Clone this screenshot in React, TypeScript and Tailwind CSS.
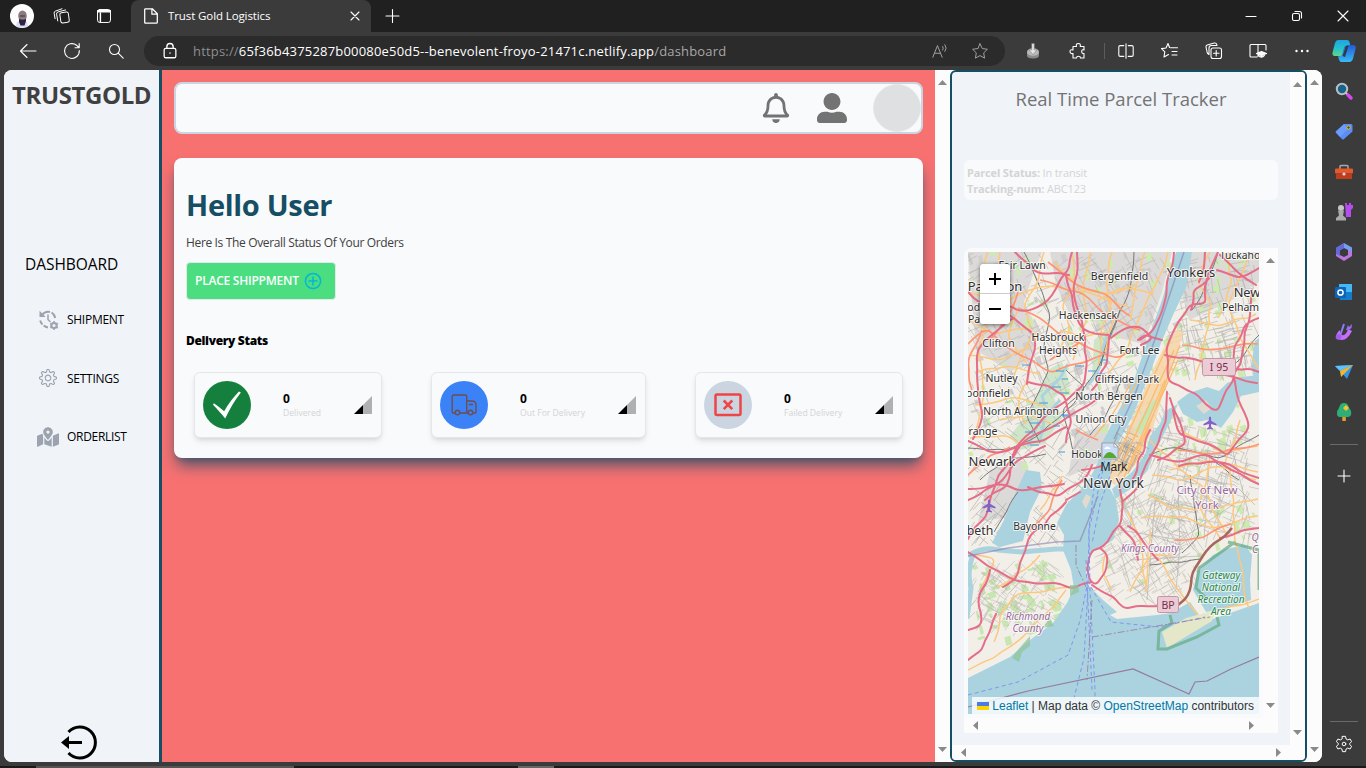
import React from 'react';
import { FaRegBell, FaUserAlt, FaMapMarkedAlt } from 'react-icons/fa';
import { SlSettings } from 'react-icons/sl';
import { GiCheckMark } from 'react-icons/gi';

type IconProps = { children: React.ReactNode; size?: number; box?: number; className?: string; color?: string; sw?: number };

function Icon({ children, size = 20, box = 20, className = '', color = 'text-white', sw = 1.1 }: IconProps) {
  return (
    <svg
      width={size}
      height={size}
      viewBox={`0 0 ${box} ${box}`}
      fill="none"
      stroke="currentColor"
      strokeWidth={sw}
      strokeLinecap="round"
      strokeLinejoin="round"
      className={`shrink-0 ${color} ${className}`}
    >
      {children}
    </svg>
  );
}

function TitleBar() {
  return (
    <div className="flex h-8 shrink-0 bg-[#202020]">
      <div className="flex w-[131px] items-center pl-[10px]">
        <svg width="24" height="24" viewBox="0 0 24 24" className="shrink-0">
          <circle cx="12" cy="12" r="12" fill="#fdfdfe" />
          <path d="M7 18q5-3 10 0l1 4q-6 3-12 0z" fill="#dcdcf2" />
          <ellipse cx="12.500" cy="12" rx="4.300" ry="5.500" fill="#8a7b80" />
          <path d="M9 15q3.500 1.500 7 0v2l-1.500 4.500h-4L9 18z" fill="#2c2540" />
          <path d="M10 12h5" stroke="#3b3142" strokeWidth="1" />
        </svg>
        <Icon size={18} className="ml-[19px]">
          <rect x="8" y="6" width="9.500" height="11.500" rx="2" transform="rotate(-8 12 11)" />
          <path d="M5.300 15.500 4 8q-.3-2 1.600-2.500L14 3.300M2.300 13 1.300 7q-.3-2 1.600-2.500L10 2" />
        </Icon>
        <Icon size={18} className="ml-[24px]">
          <rect x="2.800" y="2.800" width="14.400" height="14.400" rx="2.500" />
          <path d="M3 5.200h14M3 4h14M6 7v10" strokeWidth="1.600" />
        </Icon>
      </div>
      <div className="flex w-[240px] items-center rounded-t-lg bg-[#3b3b3b] pl-[11px] pr-[9px]">
        <Icon size={18}>
          <path d="M4 2h7.500L17 7.500V17q0 1-1 1H4q-1 0-1-1V3q0-1 1-1zM11 2.500V8h5.500" strokeWidth="1.400" />
        </Icon>
        <span className="ml-[8px] flex-1 whitespace-nowrap text-[11.500px] tracking-[-0.100px] text-white">Trust Gold Logistics</span>
        <Icon size={14} box={14}><path d="m3 3 8 8M11 3l-8 8" /></Icon>
      </div>
      <div className="flex flex-1 items-center pl-[13px]">
        <Icon size={18} box={18}><path d="M8.500 2.500v13M2 9h13" /></Icon>
      </div>
      <div className="flex w-[140px] items-center justify-between pl-[18px] pr-[16px]">
        <Icon size={14} box={14}><path d="M2 7.500h10" /></Icon>
        <Icon size={14} box={14}><rect x="2.500" y="4.500" width="7" height="7" rx="1.500" /><path d="M5 2.500h4.500q2 0 2 2V9" /></Icon>
        <Icon size={14} box={14}><path d="m2 2 10 10M12 2 2 12" /></Icon>
      </div>
    </div>
  );
}

function Toolbar() {
  return (
    <div className="flex h-[38px] shrink-0 items-center">
      <div className="flex w-[144px] items-center gap-[24px] pl-[18px]">
        <Icon><path d="M18 10H2.500M9 3.500 2.500 10 9 16.500" /></Icon>
        <Icon><path d="M17.300 9.500a7.400 7.400 0 1 1-2.800-5.300L17 6.500M17.200 2.500v4.200H13" /></Icon>
        <Icon><circle cx="8.500" cy="8.500" r="5" /><path d="m12.200 12.200 5 5" /></Icon>
      </div>
      <div className="flex h-[30px] w-[861px] items-center rounded-full bg-[#2b2b2b] pl-[17px] pr-[16px]">
        <Icon size={18}><rect x="3.500" y="7" width="13" height="10.500" rx="1.800" strokeWidth="1.400" /><path d="M6.500 7V5.200a3.500 3.500 0 0 1 7 0V7M10 12v.4" strokeWidth="1.500" /></Icon>
        <span className="ml-[14px] mt-px flex-1 whitespace-nowrap text-[13px] tracking-[0.185px] text-[#8e8e8e]">
          https://<span className="text-white">65f36b4375287b00080e50d5--benevolent-froyo-21471c.netlify.app</span><span className="text-[#a8a8a8]">/dashboard</span>
        </span>
        <Icon size={18} color="text-[#a0a0a0]"><path d="m2 17 5.200-13 5.200 13M4 12.500h6.500M13 5q1.500 2 0 4M15.500 3q2.800 4 0 7.500" /></Icon>
        <Icon size={18} className="ml-[22px]" color="text-[#a0a0a0]"><path d="m10 2 2.500 5.300 5.700.8-4.100 4 1 5.800-5.100-2.800-5.100 2.800 1-5.800-4.100-4 5.700-.8z" /></Icon>
      </div>
      <div className="flex flex-1 items-center pl-[19px]">
        <svg width="18" height="20" viewBox="0 0 18 20" className="shrink-0"><path d="M3 11v3.500q0 3 6 3t6-3V11z" fill="#8b8b8b" /><ellipse cx="9" cy="11" rx="6" ry="3.800" fill="#b9b9b9" /><path d="M7.700 2.500h2.600V9H13l-4 4.500L5 9h2.700z" fill="#e4e4e4" stroke="#777" strokeWidth=".5" /></svg>
        <Icon className="ml-[26px]"><path d="M4 5h3.500q-1-3 1.800-3t1.900 3H15v3.500q-2.300-.8-2.300 1.500T15 12v4.500h-3.500q0-1.800-2-1.800t-2 1.800H4V12Q1 12.500 1 10t3-1.500z" transform="translate(1 .5)" /></Icon>
        <div className="ml-[16px] h-4 w-px bg-[#5c5c5c]" />
        <Icon size={18} className="ml-[12px]"><path d="M7.500 4h-4q-1.500 0-1.500 1.500v9Q2 16 3.500 16h4M12.500 4h4q1.500 0 1.500 1.500v9q0 1.500-1.500 1.500h-4M10 2v16" strokeWidth="1.200" /></Icon>
        <Icon className="ml-[25px]"><path d="M10.500 6.800h7M12 10.500h5M12 14h5M9.500 6.500 8 2.500 6 7l-4.500.6 3.300 3.200L4 16l4.500-2.500" /></Icon>
        <Icon className="ml-[24px]"><rect x="7" y="7" width="10.500" height="10.500" rx="2" /><path d="M12.200 9.500v5.500M9.500 12.200H15M5 13.500 3.300 12 2 6q-.2-1.500 1.200-2l7-2q2-.3 2.500 1.300l.3 1.200H7.500Q5 4.500 5 7z" /></Icon>
        <Icon className="ml-[24px]"><path d="M10 3.500v12M9 16H3q-1 0-1-1V4.500q0-1 1-1h14q1 0 1 1V9" /><path d="m8.500 12.500 5-2 5 2-5 2zM10.500 14.500q3 3.500 6 0" fill="currentColor" /></Icon>
        <Icon className="ml-[24px]"><g fill="currentColor" stroke="none"><circle cx="4.500" cy="10" r="1.200" /><circle cx="10" cy="10" r="1.200" /><circle cx="15.500" cy="10" r="1.200" /></g></Icon>
        <svg width="24" height="24" viewBox="0 0 24 24" className="ml-[20px] shrink-0">
          <defs>
            <linearGradient id="cpa" x1="0" y1="0" x2="0" y2="1"><stop stopColor="#1fa4df" /><stop offset=".5" stopColor="#22c1cf" /><stop offset="1" stopColor="#64d982" /></linearGradient>
            <linearGradient id="cpb" x1="0" y1="0" x2="0" y2="1"><stop stopColor="#235bd8" /><stop offset="1" stopColor="#38bcf5" /></linearGradient>
          </defs>
          <path d="M6 1h9q2 0 2.500 2l.7 3-5 1-3 9Q9.500 18 7 17H3q-3 0-2.500-3.500L3 4q1-3 3-3z" fill="url(#cpa)" />
          <path d="M18 6h3q3.500 0 2.500 4l-2.300 9q-1 4-4 4H9q-2-.5-3-6 3 1 4-2l2-6q1-3 6-3z" fill="url(#cpb)" />
          <path d="m10.500 17 3.500-10h2.500L13 18z" fill="#31394b" />
        </svg>
      </div>
    </div>
  );
}

function Arrow({ dir }: { dir: 'up' | 'down' | 'left' | 'right' }) {
  const d = { up: 'M0 7 4.500 2 9 7z', down: 'M0 2h9L4.500 7z', left: 'M7 0v9L2 4.500z', right: 'M2 0v9l5-4.500z' }[dir];
  return <svg width="9" height="9" viewBox="0 0 9 9" className="shrink-0"><path d={d} fill="#8a8a8a" /></svg>;
}

function VBar() {
  return (
    <div className="flex w-[15px] shrink-0 flex-col items-center justify-between bg-[#fcfcfc] py-2">
      <Arrow dir="up" /><Arrow dir="down" />
    </div>
  );
}

function Sidebar() {
  return (
    <nav className="flex w-[158px] shrink-0 flex-col border-r-[3px] border-[#164e63] bg-[#f0f4f9]">
      <div className="mt-[9px] h-8 whitespace-nowrap pl-[8px] text-[24px] font-bold leading-8 tracking-[-0.400px] text-[#404040]">TRUSTGOLD</div>
      <div className="mt-[141px] h-6 pl-[21px] text-[15.500px] leading-6 tracking-[-0.050px] text-black">DASHBOARD</div>
      <div className="mt-[34px] flex h-5 items-center pl-[35px] text-xs tracking-[-0.280px] text-black">
        <Icon color="text-[#9ca3af]" sw={2}>
          <path d="M3 5A8 8 0 0 1 11 2M12.500 2.500A8 8 0 0 1 16.200 8M1.200 10.500A8 8 0 0 0 3.500 14.500M4.700 15.600A8 8 0 0 0 9 17.500" strokeLinecap="butt" />
          <path d="M.5.800v6.200h6.200z" fill="currentColor" stroke="none" />
          <path d="M9 5v4.500l2 2" strokeWidth="1.500" />
          <circle cx="15" cy="15.500" r="2.600" />
          <path d="M15 11.200v1.500M15 18.300v1.500M11.300 13.400l1.200.7M17.500 17l1.300.8M11.300 17.700l1.200-.8M17.500 14l1.300-.7" strokeLinecap="butt" />
        </Icon>
        <span className="ml-[8px]">SHIPMENT</span>
      </div>
      <div className="mt-[39px] flex h-5 items-center pl-[35px] text-xs tracking-[-0.250px] text-black">
        <SlSettings size={18} color="#9ca3af" className="-mt-0.5" />
        <span className="ml-[10px]">SETTINGS</span>
      </div>
      <div className="mt-[38px] flex h-5 items-center pl-[33px] text-xs tracking-[-0.300px] text-black">
        <FaMapMarkedAlt size={22} color="#9ca3af" />
        <span className="ml-[8px]">ORDERLIST</span>
      </div>
      <div className="mt-auto flex h-[37px] pl-[57px]">
        <svg width="38" height="36" viewBox="0 0 38 36" fill="none">
          <path d="M7.500 7A15.500 15.500 0 1 1 7.500 28" stroke="#000" strokeWidth="3" />
          <path d="M7 17.500h14" stroke="#000" strokeWidth="3" />
          <path d="M0 17.500 8 11v13z" fill="#000" />
        </svg>
      </div>
    </nav>
  );
}

function Signal() {
  return <svg width="18" height="18" viewBox="0 0 18 18" className="shrink-0"><path d="M0 18 9 9v9z" fill="#000" /><path d="M9 9l9-9v18H9z" fill="#afb0b2" /></svg>;
}

function Stat({ className, disc, icon, label }: { className: string; disc: string; icon: React.ReactNode; label: string }) {
  return (
    <div className={`flex h-[66px] items-center rounded-md border border-[#e5e7eb] bg-[#f8fafc] pl-2 pr-[9px] shadow-md ${className}`}>
      <div className={`flex h-12 w-12 shrink-0 items-center justify-center rounded-full ${disc}`}>{icon}</div>
      <div className="ml-8 flex-1 whitespace-nowrap">
        <div className="text-xs font-bold leading-[15px] text-black">0</div>
        <div className="mt-px text-[8.600px] leading-[12px] text-[#d4d4d4]">{label}</div>
      </div>
      <Signal />
    </div>
  );
}

function Main() {
  return (
    <main className="flex min-w-0 flex-1 flex-col overflow-hidden bg-[#f87171] px-3 pt-3">
      <header className="flex h-[52px] shrink-0 items-center justify-end rounded-lg border-2 border-[#cbd5e1] bg-[#f8fafc] text-[#737373]">
        <FaRegBell size={30} />
        <FaUserAlt size={30} className="ml-[26px]" />
        <div className="ml-[26px] h-12 w-12 rounded-full border border-[#e5e7eb] bg-[#dfe0e2]" />
      </header>
      <section className="mt-6 h-[300px] shrink-0 rounded-lg bg-[#f8fafc] px-3 shadow-[0_10px_15px_-3px_#475569,0_4px_6px_-4px_#475569]">
        <h1 className="mt-[26px] text-[29px] font-bold leading-[42px] tracking-[-0.300px] text-[#164e63]">Hello User</h1>
        <p className="mt-[9px] text-xs leading-4 tracking-[-0.350px] text-[#404040]">Here Is The Overall Status Of Your Orders</p>
        <button className="mt-[11px] flex h-[38px] w-[150px] items-center rounded border border-[#e5e7eb] bg-[#4ade80] pl-2 text-left text-xs font-semibold tracking-[-0.230px] text-white">
          <span className="w-[106px] whitespace-nowrap">PLACE SHIPPMENT</span>
          <Icon size={18} box={18} className="ml-[3px]" color="text-[#06b6d4]" sw={1.500}><circle cx="9" cy="9" r="7.600" /><path d="M9 5v8M5 9h8" /></Icon>
        </button>
        <h2 className="mt-[33px] text-xs font-extrabold leading-4 tracking-[-0.330px] text-black">Delivery Stats</h2>
        <div className="mt-[23px] flex gap-[49px] pl-2">
          <Stat className="w-[188px]" disc="bg-[#15803d]" label="Delivered" icon={<GiCheckMark size={30} color="#fff" />} />
          <Stat className="w-[215px]" disc="bg-[#3b82f6]" label="Out For Delivery" icon={
            <Icon size={26} box={26} color="text-[#6b4f52]" sw={1.400}>
              <path d="M4 21H2.500q-1.300 0-1.300-1.300V4.500Q1.200 3 2.700 3h11.500q1.500 0 1.500 1.500V21H9M15.700 9h5q4.300 0 4.300 4v7q0 1-1 1h-2M18.500 12.500h3M15.700 21h1.500" />
              <circle cx="6.500" cy="20.500" r="2.200" /><circle cx="19.500" cy="20.500" r="2.200" />
            </Icon>} />
          <Stat className="w-[208px]" disc="bg-[#cbd5e1]" label="Failed Delivery" icon={
            <Icon size={28} box={28} color="text-[#ef4444]" sw={2.500}><rect x="1.500" y="3.500" width="25" height="20.500" rx="1.500" /><path d="m9.700 9.500 8.600 8.600M18.300 9.500l-8.600 8.600" strokeLinecap="butt" /></Icon>} />
        </div>
      </section>
    </main>
  );
}

function makeRandom(seed: number) {
  let s = seed;
  return () => { s = (s * 16807) % 2147483647; return s / 2147483647; };
}

/** Turns "M x y l dx dy dx dy ..." polylines into gently winding curves. */
function wind(path: string, wobble = 2.4) {
  const r = makeRandom(path.length * 97 + 5);
  let out = '';
  for (const part of path.split('M').slice(1)) {
    const n = (part.match(/-?\d+(\.\d+)?/g) || []).map(Number);
    const pts: [number, number][] = [[n[0], n[1]]];
    for (let i = 2; i + 1 < n.length; i += 2) {
      const [px, py] = pts[pts.length - 1];
      const dx = n[i];
      const dy = n[i + 1];
      const len = Math.hypot(dx, dy);
      const steps = Math.max(1, Math.round(len / 11));
      for (let k = 1; k <= steps; k++) {
        const j = k < steps ? (r() - 0.5) * wobble * 2 : 0;
        pts.push([px + (dx * k) / steps - (dy / len) * j, py + (dy * k) / steps + (dx / len) * j]);
      }
    }
    out += `M${pts[0][0]} ${pts[0][1]}`;
    for (let i = 1; i < pts.length - 1; i++) {
      const mx = (pts[i][0] + pts[i + 1][0]) / 2;
      const my = (pts[i][1] + pts[i + 1][1]) / 2;
      out += `Q${pts[i][0].toFixed(1)} ${pts[i][1].toFixed(1)} ${mx.toFixed(1)} ${my.toFixed(1)}`;
    }
    const last = pts[pts.length - 1];
    out += `L${last[0]} ${last[1]}`;
  }
  return out;
}

function streets(seed: number, count: number, x0: number, y0: number, x1: number, y1: number, base: number) {
  const r = makeRandom(seed);
  let d = '';
  for (let i = 0; i < count; i++) {
    const x = x0 + r() * (x1 - x0);
    const y = y0 + r() * (y1 - y0);
    const a = ((base + (r() > 0.5 ? 90 : 0) + (r() - 0.5) * 20) * Math.PI) / 180;
    const l = 5 + r() * 17;
    d += `M${x.toFixed(1)} ${y.toFixed(1)}l${(Math.cos(a) * l).toFixed(1)} ${(Math.sin(a) * l).toFixed(1)}`;
  }
  return d;
}

function patches(seed: number, count: number, x0: number, y0: number, x1: number, y1: number) {
  const r = makeRandom(seed);
  let d = '';
  for (let i = 0; i < count; i++) {
    const x = x0 + r() * (x1 - x0);
    const y = y0 + r() * (y1 - y0);
    const w = 2 + r() * 6;
    const h = 2 + r() * 7;
    d += `M${x.toFixed(1)} ${y.toFixed(1)}l${w.toFixed(1)} ${(-w / 3).toFixed(1)}l2 ${h.toFixed(1)}l${(-w).toFixed(1)} 2z`;
  }
  return d;
}

const railways = 'M1024 252l16 35 10 26-6 40 5 18-23 44 14 28M1134 252l-3 32-20 48-10 34M1066 370l20 18-24 22 8 26 4 18M968 448l40 2 32-16 34-30 26-40 20-54M1090 435l14-15 20-44M1192 310l12-20 14-38M1150 455l24-8 45 12 40-24M1215 462l24 18M980 480l24-20 42-6M1150 565l52-6M1190 475l10 60-18 18M1018 492l-24 40M1259 335l-22 28-24 8';
const secondary = 'M988 252l-8 28 10 38-12 30 6 46-10 42M1000 252l-4 26 22 34-10 26 22 32-12 32 8 22M1044 252l-6 30-14 24 8 30-18 40M1072 252l2 30-12 26 8 24-15 26M1090 252l-7 34 4 34-14 40M1112 252l-6 30 8 40-9 30M1145 252l-10 38-4 30M1168 252l-14 36-20 42-6 20-20 24M1210 252l-12 30 14 22-8 38M1228 252l4 30-14 36M1248 255l-20 50 12 34 19 30M968 292l30 10 50-16 40 6 40 14M970 355l32 5 30-14M975 405l36-8 35 10M970 438l36-3 16 10M1190 320l28 6 38-12M1205 340l-10 40M1170 470l40-10 48 12M1152 475l30 6 34-15 40 14M1148 495l26 14 40 0 44-10M1142 518l40-2 30 12 46-12M1150 530l-4 58M1128 512l12 24 6 56M1130 592l22-38 22 2M1158 558l44 64M1202 623l16-12 41-12M1230 470l4 68 15 70M1210 460l-10 48 20 30M1105 555l-4 16 10 19M968 670l26-12 32-24 40-44M994 642l6-28 16-20 58-6M975 555l20 4-14 30M1040 555l-10 12-32 20M1040 510l22-34M1055 262l22 24 36 8 22-10M1098 300l22-12 34 6M968 320l28 14 24-6 26 10M978 372l28-6 34 8M1000 420l30-6 22 10M1060 330l22 8 26-6M1150 440l22 20 36 34 20 44M1180 430l40 22 38-6M1240 420l-16 50M1112 300l-12 34-2 32';
const orange = 'M1040 280l40 12 24 22 36 16M968 344l20-15 14 14 50 30 50-18M1018 308l22 10 30 22 50 18 12-10M1018 292l-10 24-20 25M1182 345l18 4 58-5M1178 450l32 4 49-10M1175 540l28-2 28-14M1030 530l20-20 12-30M1050 360l30-18M1048 262l24 20 34 12 24 22M1076 430l22 10M982 330l-14 30 4 30M968 475l22-20 20-8';
const motorways = 'M968 310l30-5 30 6 20-10 8-12 13-20 3-17M1015 252l20 20 34 3M968 292l18 14 20 16 8-4M1008 314l24 18 3 18-8 34M1004 325l-26 24-1 28 6 38-10 24M1077 252l-3 44 9 34 4 30-3 25-20 18-21 15-26 28-12 42-20 12M1066 275l10 40 8 15 25 5M1028 382l20 3 17 11 7 26-6 20M1102 395l-32 20-50 30-22 30-12 42-18 22M1111 338l12-10 16-2 14 13-12 6M1109 335l-2 30-15 25M1138 340l6-6 18 6M1174 252l-10 52-12 28-12 8M1218 252l-12 30 0 22-16 0-16 26-8 20 3 32 28 12 20 18 9-22 15-26 11-74M1259 318l-15 8-10 20-3 24 5 20 13 34-2 8-20 24-18-12-30-10-6-24M1165 355l30 4 14 5 50 8M1225 375l32 8M1220 255l36 30M968 441l30 12 46-12 22-14M968 489l30-5 30 6 36-6M968 500l35-20 12-18 30-16M1028 487l30 10 22-14 12-18M1082 470l20-4M1167 392l-1 30-18 38-10 28-16 14M1150 455l32 7 24-8 25 16 28 14M1120 480l3 22-2 22-22 25-7 1-5 14 2 16 7 5 10-14 2-16-8-7M1092 585l22 12 12 12 34-3M1120 526l14 14 4 20M1150 430l-18 50M1170 398l16 46-28 16M1080 492l-14 8M1066 502l-38 37-10 36-15 12M968 552l40 25 20 5 30 1 14 6 20-7M990 570l-12 34 3 22-13 4M968 660l14-10 14-36M1220 538l40-10M1259 478l-40-16-40 4M1191 310l2-20 18-14M1205 252l-6 30M1158 560l-16-20-14-14M1259 268l-20 10-22-8';

type Label = [number, number, string, number, string?];
const towns: Label[] = [
  [1022, 269, 'Fair Lawn', 10.5], [1119.500, 280, 'Bergenfield', 10.5], [1191, 277, 'Yonkers', 13], [1240, 258.500, 'Tuckaho', 10.3],
  [995, 291, 'Paterson', 13], [1247, 296.500, 'New', 12.800], [1240.500, 311, 'Pelham', 10.5], [978, 311, 'odla', 10.5], [979, 323, 'Park', 10.5],
  [1088, 319, 'Hackensack', 10.5], [1058, 341, 'Hasbrouck', 10.5], [1058, 353.500, 'Heights', 10.5], [998.500, 347, 'Clifton', 10.5],
  [1139.500, 354, 'Fort Lee', 10.5], [1001.500, 382, 'Nutley', 10.5], [1127, 382.500, 'Cliffside Park', 10.5], [988, 397, 'oomfield', 10.5],
  [1021, 414.500, 'North Arlington', 10.2], [1109, 399.500, 'North Bergen', 10.5], [1101, 423, 'Union City', 10.5], [983, 435, 'range', 10.5],
  [992, 466, 'Newark', 13], [1093, 457.500, 'Hoboken', 10.2], [1113.500, 488, 'New York', 13.8], [1034.500, 529.500, 'Bayonne', 10.3], [980, 535, 'beth', 12.3],
];
const regions: Label[] = [
  [1207, 494, 'City of New', 11.5, 'p'], [1207, 508.500, 'York', 11.5, 'p'], [1150, 552, 'Kings County', 10, 'pi'], [1028, 620, 'Richmond', 10, 'pi'],
  [1028, 632, 'County', 10, 'pi'], [1221, 579, 'Gateway', 10, 'gi'], [1221, 591, 'National', 10, 'gi'], [1221, 603, 'Recreation', 10, 'gi'],
  [1221, 614.500, 'Area', 10, 'gi'], [1255, 541, 'Q', 10, 'pi'], [1255, 553, 'C', 10, 'pi'],
];

function Plane({ x, y }: { x: number; y: number }) {
  return <path transform={`translate(${x} ${y})`} d="M0-6.500q1.100 0 1.100 2v2.200L6.500 1v1.500L1.100 1v3L3 5.500v1l-3-.8-3 .8v-1L-1.100 4V1l-5.400 1.500V1l5.400-3.300v-2.200q0-2 1.100-2z" fill="#8461c4" />;
}

function MapDrawing() {
  return (
    <svg width="291" height="462" viewBox="968 252 291 462" className="block font-['Noto_Sans',sans-serif]">
      <rect x="968" y="252" width="291" height="462" fill="#f2efe9" />
      <path d="M968 252h74l-8 20-10 30 14 28-8 30-20 12-34-22zM1050 252h122l-10 40-18 52-34-8-18-16-22-5-14-30zM1192 252h67v30l-30 20-40 18-8-30zM1075 435l35-12-12 40-30 14zM990 470l35-10 8 25-25 32-30 5z" fill="#dcdad8" />
      <path d={patches(7, 130, 968, 252, 1250, 470)} fill="#cdebb0" />
      <path d={patches(31, 70, 972, 560, 1055, 640)} fill="#c8e6b0" />
      <path d={patches(43, 30, 1105, 490, 1255, 600)} fill="#cdebb0" />
      <path d={patches(61, 60, 968, 252, 1180, 430)} fill="#cfcfcf" />
      <path d="M1048 370l14-8 8 22-16 14 8 20-18 26-24 6-10-14 20-26zM1094 340l12-10 2 25-16 22z" fill="#cfe5c9" />
      <g strokeWidth=".6" fill="none">
        <path d={streets(11, 420, 968, 252, 1165, 420, 62)} stroke="#b7b4b0" />
        <path d={streets(17, 190, 1180, 256, 1255, 370, 75)} stroke="#b2b0ad" />
        <path d={streets(23, 270, 1100, 490, 1195, 590, 58)} stroke="#bdbab6" />
        <path d={streets(29, 270, 1150, 425, 1250, 535, 18)} stroke="#b9b6b2" />
        <path d={streets(37, 150, 975, 560, 1050, 620, 35)} stroke="#bdbab6" />
        <path d={streets(41, 170, 970, 420, 1090, 540, 40)} stroke="#aaa8a6" />
        <path d="M1120 550l30-15 30 10-4 45-20 15-26-20zM1130 530l5-40 40-15 60 10 20 20M1120 530l60 10 60-40M1130 560l70-4M1155 500l-8 100M1178 480l2 70M1210 450l-6 90M1230 440l20 80" stroke="#aaa" />
      </g>
      <g fill="#aad3df" strokeLinejoin="round">
        <path d="M1176 252H1192L1186 288 1173 315 1161 343 1148 378 1132 417 1117 445 1112 473 1109 487 1116 500 1119 520 1113 540 1097 550 1089 553 1086 570 1088 585 1103 600 1117 612 1110 615 1117 619 1157 615 1171 613 1190 602 1204 622 1259 603V714H968V678L988 668 1010 657 1030 640 1053 623 1067 603 1074 588 1071 570 1063 550 1064 535 1057 523 1066 505 1080 490 1090 478 1098 462 1101 445 1119 410 1133 383 1146 345 1162 300z" />
        <path d="M1193 590L1198 571 1213 555 1226 549 1245 545 1252 555 1250 580 1251 600 1228 608 1206 612z" />
        <path d="M1177 402L1189 393 1207 387 1219 391 1227 383 1241 377 1259 375V392L1241 396 1233 412 1221 428 1207 420 1197 422 1183 414zM1252 360L1255 341 1259 338V383L1253 375z" />
        <path d="M1178 404L1165 411 1160 424 1150 436 1145 455 1132 472 1112 489 1115 499 1132 488 1148 470 1152 455 1160 442 1169 424z" />
        <path d="M1026 470L1040 472 1042 488 1030 512 1023 541 1000 547 992 543 1004 520 1014 496z" />
      </g>
      <path d="M968 556q14-10 30-6l24 2 34-3 14 0M974 552q-8 20-3 36l-4 30" fill="none" stroke="#aad3df" strokeWidth="5" />
      <path d="M1040 440q8-30 2-44l18-18 8-14M1088 385q14-14 14-34l6-18M1060 400l-22 24-10 22" fill="none" stroke="#aad3df" strokeWidth="3" />
      <path d="M1196 406l10-6 6 8-8 6zM1082 502l4-8 5 3-5 12z" fill="#e0dad0" />
      <path d="M1176 330l8 2-12 34-10 32-9 30-10 22-13 22-15 13-6-4 3-26 14-20 22-54 14-30z" fill="#f8d3a2" opacity=".8" />
      <path d="M1146 408l9-9 3 3-17 33-7-4z" fill="#c8e6b0" stroke="#ddd" />
      <path d={streets(53, 50, 1114, 430, 1138, 460, 28)} stroke="#999" strokeWidth=".6" />
      <path d={wind(railways, 1.500)} fill="none" stroke="#777" strokeWidth="1" />
      <path d={wind(secondary, 2)} fill="none" stroke="#fcc87e" strokeWidth="1.500" />
      <path d="M1174 350l-50 110M1178 360l-50 110M1165 380l-42 100M1170 340l-52 116M1180 345l-46 120M1130 385l-18 30-18 22M1138 380l-16 28" fill="none" stroke="#fbbd70" strokeWidth="1.400" />
      <path d={wind(orange, 2)} fill="none" stroke="#ff9575" strokeWidth="1.700" />
      <path d={wind(motorways)} fill="none" stroke="#e66d87" strokeWidth="2" strokeLinejoin="round" strokeLinecap="round" />
      <path d={wind('M1232 528l-26 23-14 22-2 18-12 14', 2)} fill="none" stroke="#a8665e" strokeWidth="2.500" />
      <path d="M1162 632l24-14 30-8-4 11-45 27z" fill="#e5e8c8" />
      <path d="M1235 542l-36 26-3 20 10 10M1228 542l31 8v40M1170 615l2 8-13 8-1 18h9l30-12 22-12-2-8" fill="none" stroke="#65aa83" strokeWidth="3" opacity=".72" />
      <path d="M1070 585l8 0 1 7-9 4zM1016 652l14-16 0 10-8 6-3 10-7-4zM1042 628l8-10 4 8z" fill="#8fc69b" opacity=".75" />
      <path d="M1184 252l-15 45-15 45-20 55-20 42M968 556l40-8 48-6 24-1 18-45" stroke="#8a7fb0" opacity=".6" fill="none" strokeWidth="1.500" />
      <path d="M968 707l60-16 105-22 56 25 6-12 12-1 24-12 28-12" fill="none" stroke="#947b9f" strokeWidth="1.200" />
      <path d="M1110 448l-16 40-5 40-1 60-4 70-14 56M1103 470l-14 60 1 60 5 100 0 24M1091 587l20 35 48 5 46-10M968 695l50-13 50-27 12-34 8-40M1086 560l6 130M1112 470l-12 34 -8 40" fill="none" stroke="#8095ef" strokeWidth="1" strokeDasharray="4 3" />
      <path d="M1092 637l118-20M1092 600l-5 80M1076 545v20l10 22" fill="none" stroke="#9a82a8" strokeWidth=".9" strokeDasharray="7 2 2 2" />
      <path d="M1022 365h9m25 6h8m-2 8h6m-16 8h9m14-21h9m4 5h8m-36 22h9m-30 10h9m13 12h7m-38 8h10m-15 9h8m20-6h7m-30 19h9m20 7h6m-3-36h8m31-56h7m-11 14h8m-18 20h9" stroke="#4597dc" strokeWidth="1" />
      <Plane x={1210} y={423} />
      <Plane x={989} y={506} />
      <g textAnchor="middle" fill="#303030" stroke="#fff" strokeWidth="2" strokeOpacity=".75" paintOrder="stroke" strokeLinejoin="round">
        {towns.map(([x, y, t, s]) => <text key={t + y} x={x} y={y} fontSize={s}>{t}</text>)}
      </g>
      <g textAnchor="middle" stroke="#fff" strokeWidth="2" strokeOpacity=".7" paintOrder="stroke" strokeLinejoin="round">
        {regions.map(([x, y, t, s, k]) => <text key={t + y} x={x} y={y} fontSize={s} fontStyle={k === 'p' ? 'normal' : 'italic'} fill={k === 'gi' ? '#28884a' : '#9a6a9e'}>{t}</text>)}
      </g>
      <g fill="#ebccd4" stroke="#c795a7">
        <rect x="1202.500" y="358.500" width="33" height="17" rx="2" /><rect x="1157.500" y="596.500" width="21" height="16" rx="2" />
      </g>
      <g textAnchor="middle" fill="#792c50" fontSize="10.500"><text x="1219" y="371">I 95</text><text x="1168" y="608.500">BP</text></g>
      <path d="M1101.500 458v-15h40" fill="none" stroke="#b8b8b8" />
      <path d="M1102 443h12l4 4v12h-16z" fill="#c9dcf8" stroke="#a6a6a6" />
      <path d="M1103 458q6-12 14 0z" fill="#56a832" /><path d="M1104 449q3-5 7 0z" fill="#fff" /><path d="M1114 443v4h4z" fill="#fff" stroke="#888" strokeWidth=".6" />
      <text x="1100.500" y="471" fontSize="12" fill="#222" className="font-['Liberation_Sans',sans-serif]">Mark</text>
    </svg>
  );
}

function MapCard() {
  return (
    <div className="mt-12 flex h-[485px] w-[314px] shrink-0 flex-col rounded-tl-lg bg-[#f8fafc]">
      <div className="flex h-[470px] shrink-0">
        <div className="relative w-[299px] shrink-0 pl-1 pt-1">
          <MapDrawing />
          <div className="absolute left-[16px] top-[16px] w-[30px] rounded-[3px] bg-white shadow-[0_1px_4px_#0008]">
            <div className="flex h-[30px] items-center justify-center border-b border-[#ccc]"><Icon size={14} box={14} sw={2} color="text-black"><path d="M7 1v12M1 7h12" strokeLinecap="butt" /></Icon></div>
            <div className="flex h-[30px] items-center justify-center"><Icon size={14} box={14} sw={2} color="text-black"><path d="M1 7h12" strokeLinecap="butt" /></Icon></div>
          </div>
          <div className="absolute bottom-[4px] right-[4px] flex h-[17px] items-center whitespace-nowrap bg-white/80 px-[5px] font-['Liberation_Sans',sans-serif] text-xs tracking-[-0.010px] text-[#333]">
            <svg width="12" height="8" className="mr-[3px]"><path fill="#4c7be1" d="M0 0h12v4H0z" /><path fill="#ffd500" d="M0 4h12v4H0z" /></svg>
            <span className="text-[#0078a8]">Leaflet</span>
            <span className="whitespace-pre"> | Map data © </span>
            <span className="text-[#0078a8]">OpenStreetMap</span>
            <span className="whitespace-pre"> contributors</span>
          </div>
        </div>
        <VBar />
      </div>
      <div className="flex h-[15px] items-center justify-between bg-[#fcfcfc] pl-[7px] pr-[22px]"><Arrow dir="left" /><Arrow dir="right" /></div>
    </div>
  );
}

function Tracker() {
  return (
    <aside className="flex w-[357px] shrink-0 flex-col overflow-hidden rounded-md border-2 border-[#164e63] bg-[#f0f4f9]">
      <div className="flex h-[673px] shrink-0">
        <div className="flex flex-1 flex-col pl-3">
          <h2 className="mt-[13px] h-7 w-[314px] whitespace-nowrap text-center text-[18.500px] leading-7 text-[#737373]">Real Time Parcel Tracker</h2>
          <div className="mt-[47px] h-10 w-[314px] shrink-0 rounded-md bg-[#f8fafc] px-[3px] pt-[5px] text-[11px] leading-4 tracking-[-0.150px] text-[#d4d4d4]">
            <div><b>Parcel Status:</b> In transit</div>
            <div><b>Tracking-num:</b> ABC123</div>
          </div>
          <MapCard />
        </div>
        <VBar />
      </div>
      <div className="flex h-[15px] items-center justify-between bg-[#fcfcfc] pl-[7px] pr-[22px]"><Arrow dir="left" /><Arrow dir="right" /></div>
    </aside>
  );
}

function Rail() {
  return (
    <div className="flex w-[43px] shrink-0 flex-col items-center pt-3">
      <div className="flex flex-col items-center gap-5">
        <svg width="20" height="20" viewBox="0 0 20 20"><circle cx="8" cy="7" r="5.200" fill="#19638a" stroke="#b8c0c5" strokeWidth="2" /><path d="m12 11 2 2" stroke="#ccc" strokeWidth="2" /><path d="m14 13 3 3" stroke="#d946ef" strokeWidth="3.500" strokeLinecap="round" /></svg>
        <svg width="20" height="20" viewBox="0 0 20 20"><path d="M10 2h7q1.500 0 1.500 1.500v6L10 17q-1 1-2 0l-6-6q-1-1 0-2z" fill="#5a8df5" /><path d="m2 10 8-8 4 5-8 8z" fill="#79a9ff" opacity=".6" /><circle cx="14.500" cy="5.500" r="1.700" fill="#4a4a40" stroke="#f5c21b" /></svg>
        <svg width="20" height="20" viewBox="0 0 20 20"><path d="M6 7V4.500q0-1 1-1h6q1 0 1 1V7" fill="none" stroke="#a9a9a9" strokeWidth="1.500" /><rect x="1" y="6.500" width="18" height="5" rx="1" fill="#e8562b" /><path d="M2 11.500h16V17H2z" fill="#bd3d1d" /><circle cx="10" cy="12" r="1.600" fill="#ddd" /></svg>
        <svg width="20" height="20" viewBox="0 0 20 20"><path d="M11 1h2v2h2V1h2v2h2V1v5l-2 2v7H12z" fill="#b44cf0" /><circle cx="7" cy="6" r="3" fill="#c7c7c7" /><path d="M4 8.500h6l-1 5 3 2.500v2.500H2V16l3-2.500z" fill="#aaa" /></svg>
        <svg width="20" height="20" viewBox="0 0 20 20"><path d="m10 1 8 4.500v8L14 16V8l-4-2-4 2.300V14l-4-2V6z" fill="#759df2" /><path d="m14 8 4 2v4l-8 5-8-5v-3l8 4 4-2z" fill="#bd76dd" /><path d="m2 6 8-5v5L6 8.300V14l-4-2z" fill="#6369d8" /><path d="m10 6.500 3.500 2v3.500L10 14l-3.500-2V8.500z" fill="#3b3b3b" /></svg>
        <svg width="20" height="20" viewBox="0 0 20 20"><path d="M5 2h13v9H5z" fill="#44b8f2" /><path d="M5 10h13v8H6z" fill="#167bcb" /><rect x="1" y="5" width="11" height="11" rx="1" fill="#0b65b8" /><circle cx="6.500" cy="10.500" r="2.600" fill="none" stroke="#fff" strokeWidth="1.500" /></svg>
        <svg width="20" height="20" viewBox="0 0 20 20"><path d="M6 8q-6 5-2 9 8 4 14-8l-4-2q-2 7-6 6-2-1-2-5z" fill="#c66ffa" /><path d="m6 14 4-12" stroke="#8f7cf7" strokeWidth="2" /><circle cx="4.500" cy="15" r="2.800" fill="#a45cee" /><path d="m14 3 1 2 3-3-.5 4-2.500 2h-3z" fill="#9270f2" /></svg>
        <svg width="20" height="20" viewBox="0 0 20 20"><path d="M1 4 19 3 13 17 8 11z" fill="#3293e8" /><path d="M1 4 19 3 6 9z" fill="#61c1ff" /><path d="m19 3-13 6 1 6 3-3z" fill="#f2b72a" /></svg>
        <svg width="20" height="20" viewBox="0 0 20 20"><path d="M8.300 12h3.500v7H8.300z" fill="#f29b22" /><path d="M10 1q4 0 5 5 3 3 2 7-1 2-3 2H6q-3 0-3-3 0-4 2-6 1-5 5-5z" fill="#30ae78" /><path d="m12 3 3 3-3 3-3-3z" fill="#f5c431" /></svg>
      </div>
      <div className="mt-[22px] h-px w-7 bg-[#6a6a6a]" />
      <Icon className="mt-[23px]" size={16} box={16}><path d="M8 2v12M2 8h12" /></Icon>
      <div className="mt-auto h-px w-7 bg-[#6a6a6a]" />
      <Icon className="mb-[9px] mt-[13px]" size={18}><circle cx="10" cy="10" r="2" /><path d="M8.300 1.500h3.400l.6 2.900 1.700 1 2.800-.9 1.700 2.900-2.200 2v1.200l2.200 2-1.700 2.900-2.800-.9-1.700 1-.6 2.900H8.300l-.6-2.900-1.700-1-2.800.9-1.700-2.900 2.200-2V9.400l-2.200-2 1.700-2.900 2.800.9 1.700-1z" /></Icon>
    </div>
  );
}

export default function App() {
  return (
    <div className="flex h-[768px] w-[1366px] flex-col overflow-hidden bg-[#3b3b3b] font-['Open_Sans',sans-serif]">
      <TitleBar />
      <Toolbar />
      <div className="flex h-[692px] shrink-0 pl-1">
        <div className="flex w-[1318px] shrink-0 overflow-hidden rounded-lg bg-[#fcfcfc]">
          <Sidebar />
          <Main />
          <VBar />
          <Tracker />
          <VBar />
        </div>
        <Rail />
      </div>
      <div className="mt-1 flex h-[2px] bg-[#1a1a1a] pl-9"><div className="w-[258px] bg-[#555]" /><div className="ml-[224px] w-9 bg-[#666]" /></div>
    </div>
  );
}
